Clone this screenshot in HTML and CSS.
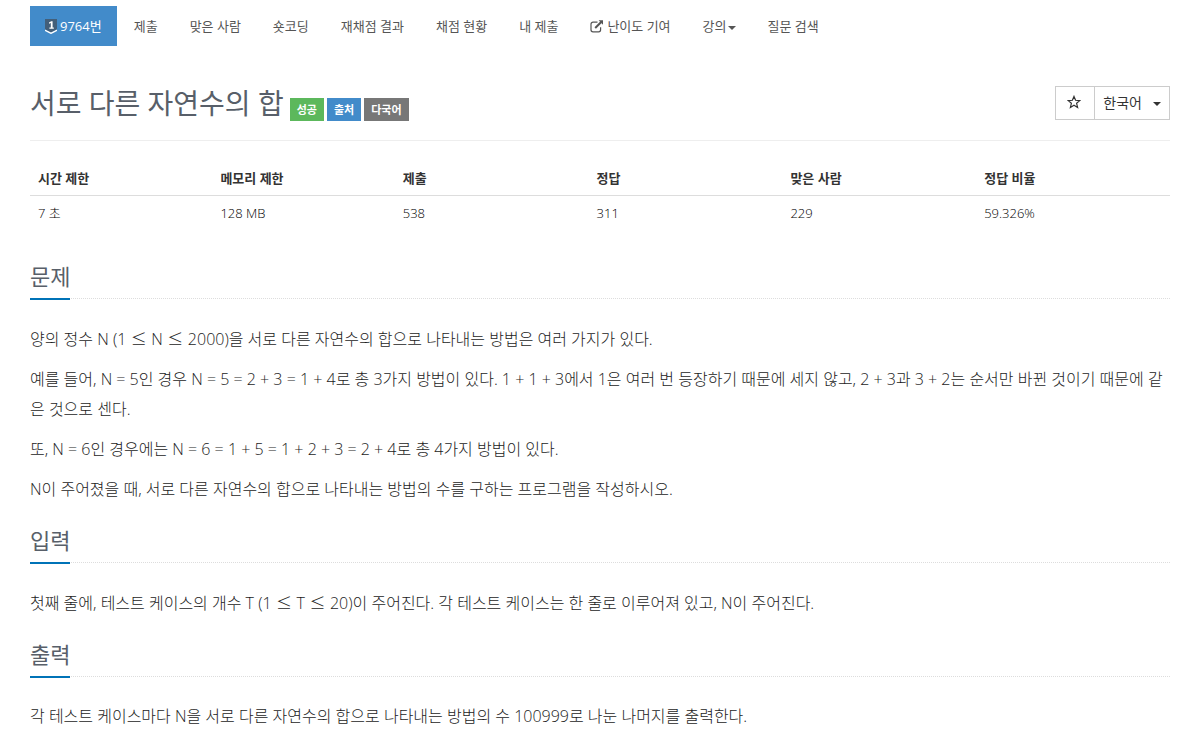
FILE: index.html
```html
<!DOCTYPE html>
<html lang="ko">
<head>
    <meta charset="UTF-8">
    <meta name="viewport" content="width=device-width, initial-scale=1.0">
    <title>9764번: 서로 다른 자연수의 합</title>
    <link rel="stylesheet" href="styles.css">
</head>
<body>
    <div class="container">
        <!-- Problem menu -->
        <nav>
            <ul class="problem-menu">
                <li class="active"><a href="#"><svg class="tier" viewBox="0 0 12 15" aria-hidden="true">
                    <path d="M0 0h12v10.5l-6 3-6-3z" fill="#435f7a"/>
                    <path d="M0 10.5l6 3 6-3v1.6l-6 3-6-3z" fill="#fff"/>
                    <path d="M4 3.6l2.2-1.4h1.4v6.2h1.2v1.3h-4.4v-1.3h1.4v-4.3l-1.8.7z" fill="#fff"/>
                </svg>9764번</a></li>
                <li><a href="#">제출</a></li>
                <li><a href="#">맞은 사람</a></li>
                <li><a href="#">숏코딩</a></li>
                <li><a href="#">재채점 결과</a></li>
                <li><a href="#">채점 현황</a></li>
                <li><a href="#">내 제출</a></li>
                <li><a href="#"><svg class="external" viewBox="0 0 14 13" aria-hidden="true">
                    <path d="M7.5 2.2H3A2 2 0 0 0 1 4.2v5.6a2 2 0 0 0 2 2h5.6a2 2 0 0 0 2-2V7.2" fill="none" stroke="#555" stroke-width="1.2"/>
                    <path d="M5.2 8l6-6" stroke="#555" stroke-width="2"/>
                    <path d="M8.6.2H13v4.6z" fill="#555"/>
                </svg>난이도 기여</a></li>
                <li><a href="#">강의<span class="caret"></span></a></li>
                <li><a href="#">질문 검색</a></li>
            </ul>
        </nav>

        <!-- Title -->
        <div class="page-header">
            <h1>서로 다른 자연수의 합</h1>
            <div class="labels">
                <span class="label label-success">성공</span>
                <span class="label label-source">출처</span>
                <span class="label label-multi">다국어</span>
            </div>
            <div class="btn-group">
                <button type="button" class="btn" aria-label="즐겨찾기"><svg class="star" viewBox="0 0 14 14" aria-hidden="true">
                    <path d="M7 1.4l1.6 3.9 4.2.3-3.2 2.7 1 4.1L7 10.2l-3.6 2.2 1-4.1L1.2 5.6l4.2-.3z" fill="none" stroke="#333" stroke-width="1.2"/>
                </svg></button>
                <button type="button" class="btn">한국어<span class="caret"></span></button>
            </div>
        </div>

        <table class="problem-info">
            <thead>
                <tr>
                    <th class="limit">시간 제한</th>
                    <th class="limit">메모리 제한</th>
                    <th>제출</th>
                    <th>정답</th>
                    <th>맞은 사람</th>
                    <th>정답 비율</th>
                </tr>
            </thead>
            <tbody>
                <tr>
                    <td>7 초</td>
                    <td>128 MB</td>
                    <td>538</td>
                    <td>311</td>
                    <td>229</td>
                    <td>59.326%</td>
                </tr>
            </tbody>
        </table>

        <!-- Problem body -->
        <section>
            <div class="headline"><h2>문제</h2></div>
            <div class="problem-text">
                <p>양의 정수 N (1<span class="sign"> ≤ </span>N<span class="sign"> ≤ </span>2000)을 서로 다른 자연수의 합으로 나타내는 방법은 여러 가지가 있다.</p>
                <p>예를 들어, N = 5인 경우 N = 5 = 2 + 3 = 1 + 4로 총 3가지 방법이 있다. 1 + 1 + 3에서 1은 여러 번 등장하기 때문에 세지 않고, 2 + 3과 3 + 2는 순서만 바뀐 것이기 때문에 같은 것으로 센다.</p>
                <p>또, N = 6인 경우에는 N = 6 = 1 + 5 = 1 + 2 + 3 = 2 + 4로 총 4가지 방법이 있다.</p>
                <p>N이 주어졌을 때, 서로 다른 자연수의 합으로 나타내는 방법의 수를 구하는 프로그램을 작성하시오.</p>
            </div>
        </section>

        <section>
            <div class="headline"><h2>입력</h2></div>
            <div class="problem-text">
                <p>첫째 줄에, 테스트 케이스의 개수 T (1<span class="sign"> ≤ </span>T<span class="sign"> ≤ </span>20)이 주어진다. 각 테스트 케이스는 한 줄로 이루어져 있고, N이 주어진다.</p>
            </div>
        </section>

        <section>
            <div class="headline"><h2>출력</h2></div>
            <div class="problem-text">
                <p>각 테스트 케이스마다 N을 서로 다른 자연수의 합으로 나타내는 방법의 수 100999로 나눈 나머지를 출력한다.</p>
            </div>
        </section>
    </div>
</body>
</html>
```
FILE: styles.css
```css
* {
    box-sizing: border-box;
}
body {
    margin: 0;
    background-color: #fff;
    color: #333;
    font-family: "Open Sans", "Noto Sans CJK KR", sans-serif;
    font-size: 13px;
    line-height: 20px;
}
.container {
    max-width: 1200px;
    margin: 0 auto;
    padding: 6px 29px 0 30px;
}
.problem-menu {
    display: flex;
    flex-wrap: wrap;
    gap: 2px;
    margin: 0;
    padding: 0;
    list-style: none;
}
.problem-menu a {
    display: flex;
    align-items: center;
    height: 40px;
    padding: 0 15px;
    color: #555;
    text-decoration: none;
}
.problem-menu .active a {
    background-color: #428bca;
    color: #fff;
}
.tier {
    width: 12px;
    height: 15px;
    margin-right: 3px;
}
.external {
    width: 14px;
    height: 13px;
    margin-right: 3px;
}
.caret {
    display: inline-block;
    margin-top: 3px;
    margin-left: 1px;
    border-top: 4px solid;
    border-right: 4px solid transparent;
    border-left: 4px solid transparent;
}
.page-header {
    display: flex;
    align-items: flex-end;
    height: 95px;
    padding-bottom: 20px;
    border-bottom: 1px solid #eee;
}
h1 {
    margin: 0;
    color: #585f69;
    font-size: 28px;
    font-weight: 400;
    line-height: 34px;
}
.labels {
    display: flex;
    gap: 3px;
    margin-bottom: -1px;
    margin-left: 6px;
}
.label {
    padding: 2px 7px;
    color: #fff;
    font-size: 11px;
    font-weight: 700;
    line-height: 19px;
}
.label-success {
    background-color: #5cb85c;
}
.label-source {
    background-color: #428bca;
}
.label-multi {
    background-color: #777;
}
.btn-group {
    display: flex;
    margin-left: auto;
}
.btn {
    display: flex;
    align-items: center;
    height: 34px;
    padding: 0 8px 2px;
    border: 1px solid #ccc;
    background-color: #fff;
    color: #333;
    font-family: inherit;
    font-size: 14px;
    cursor: pointer;
}
.btn:first-child {
    padding: 0 13px 2px 11px;
}
.btn + .btn {
    margin-left: -1px;
}
.btn .caret {
    margin-left: 11px;
}
.star {
    width: 14px;
    height: 14px;
}
.problem-info {
    width: 100%;
    margin: 20px 0 30px;
    border-collapse: collapse;
    line-height: 18px;
    table-layout: fixed;
}
.problem-info th,
.problem-info td {
    width: 17%;
    padding: 8px;
    text-align: left;
}
.problem-info .limit {
    width: 16%;
}
.problem-info th {
    border-bottom: 1px solid #ddd;
    font-weight: 700;
}
.problem-info td {
    color: #000;
    font-weight: 300;
}
.headline {
    display: flex;
    margin: 20px 0 24px;
    border-bottom: 1px dotted #ddd;
}
.headline h2 {
    margin: 0 0 -2px;
    padding-bottom: 5px;
    border-bottom: 2px solid #0073b7;
    color: #585f69;
    font-size: 22px;
    font-weight: 400;
    line-height: 33px;
}
.problem-text {
    color: #1c1c1c;
    font-size: 16px;
    font-weight: 300;
    line-height: 30px;
}
.problem-text p {
    margin: 0 0 10px;
}
.sign {
    font-family: "Noto Sans CJK KR", sans-serif;
}
```
